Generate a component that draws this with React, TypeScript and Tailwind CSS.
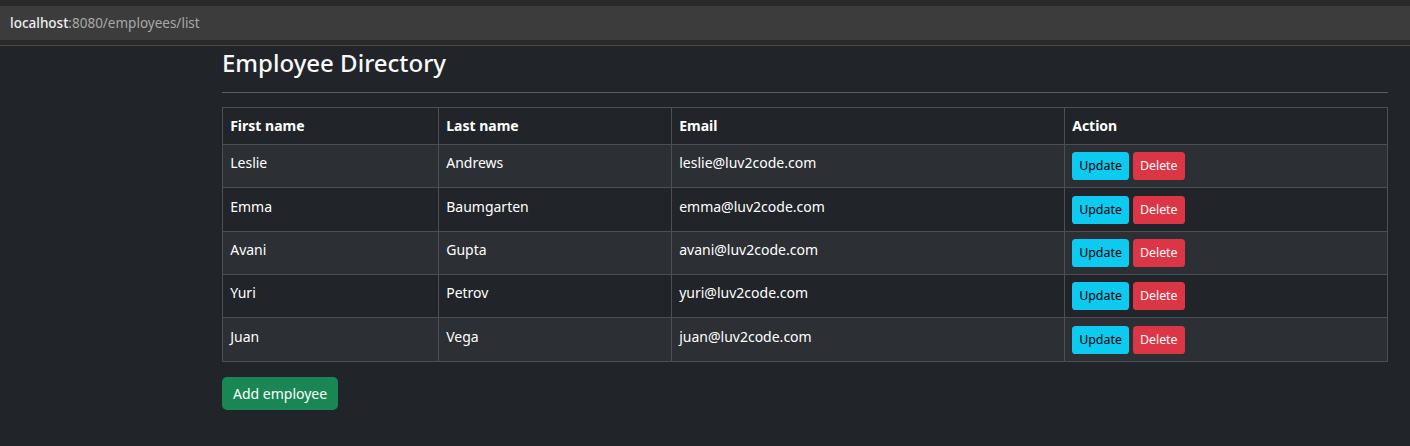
const employees = [
  { first: "Leslie", last: "Andrews", email: "leslie@luv2code.com" },
  { first: "Emma", last: "Baumgarten", email: "emma@luv2code.com" },
  { first: "Avani", last: "Gupta", email: "avani@luv2code.com" },
  { first: "Yuri", last: "Petrov", email: "yuri@luv2code.com" },
  { first: "Juan", last: "Vega", email: "juan@luv2code.com" },
];

export default function App() {
  return (
    <div className="min-h-[446px] bg-[#212529] font-['Noto_Sans','Open_Sans',sans-serif] text-[#dee2e6]">
      {/* browser chrome */}
      <div className="h-[46px] border-b border-[#4a4a4a] bg-[#292929] pt-[6px]">
        <div className="flex h-[34px] items-center bg-[#3c3c3c] pl-[10px] text-[13.5px]">
          <span className="font-medium text-[#f0f0f0]">localhost</span>
          <span className="text-[#a8a8a8]">:8080/employees/list</span>
        </div>
      </div>

      <div className="ml-[222px] w-[1166px] pb-8">
        <h3 className="mt-[2px] text-[24px] leading-[30px] font-medium text-[#f8f9fa]">Employee Directory</h3>
        <hr className="mt-[14px] border-t border-[#5a5e63]" />

        <table className="mt-[14px] w-full border-collapse border border-[#495057] text-[14px] leading-[21.6px] text-white">
          <thead>
            <tr className="bg-[#212529]">
              <th className="w-[216px] border border-[#495057] px-[7.2px] py-[7.2px] text-left font-bold">First name</th>
              <th className="w-[233px] border border-[#495057] px-[7.2px] py-[7.2px] text-left font-bold">Last name</th>
              <th className="w-[393px] border border-[#495057] px-[7.2px] py-[7.2px] text-left font-bold">Email</th>
              <th className="border border-[#495057] px-[7.2px] py-[7.2px] text-left font-bold">Action</th>
            </tr>
          </thead>
          <tbody>
            {employees.map((e, i) => (
              <tr key={e.email} className={i % 2 === 0 ? "bg-[#2c3034]" : "bg-[#212529]"}>
                <td className="border border-[#495057] px-[7.2px] py-[7.2px] align-top">{e.first}</td>
                <td className="border border-[#495057] px-[7.2px] py-[7.2px] align-top">{e.last}</td>
                <td className="border border-[#495057] px-[7.2px] py-[7.2px] align-top">{e.email}</td>
                <td className="border border-[#495057] px-[7.2px] py-[7.2px] align-top">
                  <div className="flex gap-[4px]">
                    <button className="h-[28px] rounded-[3.6px] bg-[#0dcaf0] px-[7px] text-[12.4px] text-black">Update</button>
                    <button className="h-[28px] rounded-[3.6px] bg-[#dc3545] px-[7px] text-[12.4px] text-white">Delete</button>
                  </div>
                </td>
              </tr>
            ))}
          </tbody>
        </table>

        <button className="mt-[15px] h-[33px] rounded-[5px] bg-[#198754] px-[11px] text-[14px] text-white">Add employee</button>
      </div>
    </div>
  );
}
